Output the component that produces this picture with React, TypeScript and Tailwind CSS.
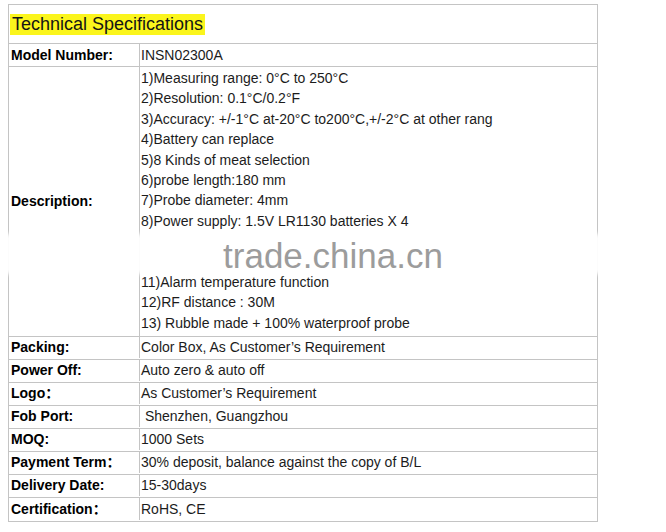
const descLines = [
  '1)Measuring range: 0°C to 250°C',
  '2)Resolution: 0.1°C/0.2°F',
  '3)Accuracy: +/-1°C at-20°C to200°C,+/-2°C at other rang',
  '4)Battery can replace',
  '5)8 Kinds of meat selection',
  '6)probe length:180 mm',
  '7)Probe diameter: 4mm',
  '8)Power supply: 1.5V LR1130 batteries X 4',
  '',
  '',
  '11)Alarm temperature function',
  '12)RF distance : 30M',
  '13) Rubble made + 100% waterproof probe',
];

const rows = [
  { label: 'Packing:', value: 'Color Box, As Customer’s Requirement' },
  { label: 'Power Off:', value: 'Auto zero & auto off' },
  { label: 'Logo：', value: 'As Customer’s Requirement' },
  { label: 'Fob Port:', value: '\u00a0Shenzhen, Guangzhou' },
  { label: 'MOQ:', value: '1000 Sets' },
  { label: 'Payment Term：', value: '30% deposit, balance against the copy of B/L' },
  { label: 'Delivery Date:', value: '15-30days' },
  { label: 'Certification：', value: 'RoHS, CE' },
];

const App = () => {
  return (
    <div className="w-[666px] h-[532px] bg-white relative overflow-hidden pt-[4px] pl-[8px] font-['Liberation_Sans','Noto_Sans_CJK_SC',Arial,sans-serif] text-[14px] text-[#1c1c1c]">
      <div className="w-[590px] border border-[#c4c4c4]">
        <div className="h-[39px] border-b border-[#c4c4c4] flex items-center pl-[1px] pt-[1px]">
          <span className="bg-[#fbf51c] text-[18px] leading-[21px] px-[2px] text-[#141414]">Technical Specifications</span>
        </div>

        <div className="grid grid-cols-[131px_1fr] h-[23px] border-b border-[#c4c4c4]">
          <div className="border-r border-[#c4c4c4] pl-[2px] flex items-center font-bold text-black">Model Number:</div>
          <div className="pl-[1px] flex items-center">INSN02300A</div>
        </div>

        <div className="grid grid-cols-[131px_1fr] h-[270px] border-b border-[#c4c4c4]">
          <div className="border-r border-[#c4c4c4] pl-[2px] flex items-center font-bold text-black">Description:</div>
          <div className="pl-[1px] pt-[1px] flex flex-col">
            {descLines.map((line, i) => (
              <div key={i} className="h-[20.4px] leading-[20.4px] whitespace-nowrap">{line || '\u00a0'}</div>
            ))}
          </div>
        </div>

        {rows.map((r, i) => (
          <div key={r.label} className={`grid grid-cols-[131px_1fr] h-[23px] pb-[1px] ${i < rows.length - 1 ? 'border-b border-[#c4c4c4]' : ''}`}>
            <div className="border-r border-[#c4c4c4] pl-[2px] flex items-center font-bold text-black whitespace-nowrap">{r.label}</div>
            <div className="pl-[1px] flex items-center whitespace-pre">{r.value}</div>
          </div>
        ))}
      </div>

      <div className="absolute left-0 top-[234px] w-[622px] h-[40px] bg-white/95 blur-[2px]" />
      <div className="absolute left-0 top-[236px] w-[666px] h-[40px] flex items-center justify-center">
        <span className="text-[35px] leading-[40px] text-[#9c9c9c]">trade.china.cn</span>
      </div>
    </div>
  );
};

export default App;
